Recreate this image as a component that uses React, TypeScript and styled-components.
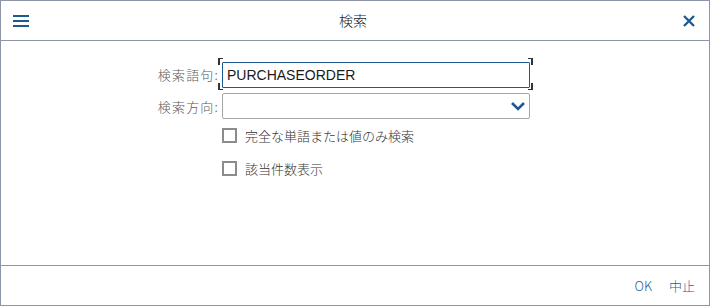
import React from "react";
import styled, { createGlobalStyle } from "styled-components";

const Global = createGlobalStyle`
  html, body { margin: 0; padding: 0; background: #ffffff; }
  body { font-family: "Noto Sans CJK JP", "Noto Sans", sans-serif; }
  * { box-sizing: border-box; }
`;

const Window = styled.div`
  width: 710px;
  height: 306px;
  border: 1px solid #8e95a8;
  display: flex;
  flex-direction: column;
  background: #fff;
`;

const Header = styled.header`
  height: 40px;
  flex: none;
  border-bottom: 1px solid #8e95a8;
  display: grid;
  grid-template-columns: 40px 1fr 40px;
  align-items: center;
`;

const IconButton = styled.button`
  border: 0;
  background: transparent;
  padding: 0;
  height: 39px;
  display: flex;
  align-items: center;
  justify-content: center;
  color: #1d5a93;
  cursor: pointer;
`;

const Title = styled.h1`
  margin: 0 0 0 -4px;
  text-align: center;
  font-size: 14px;
  font-weight: 300;
  color: #222;
  line-height: 39px;
`;

const Content = styled.main`
  flex: 1;
  padding-top: 20px;
`;

const FormGrid = styled.div`
  display: grid;
  grid-template-columns: 218px 308px;
  column-gap: 3px;
  row-gap: 6px;
  align-items: center;
`;

const Label = styled.label`
  text-align: right;
  font-size: 13px;
  font-weight: 300;
  letter-spacing: 1.2px;
  color: #5a5a5a;
  white-space: nowrap;
`;

const FieldWrap = styled.div`
  position: relative;
  height: 26px;
`;

const TextInput = styled.input`
  width: 100%;
  height: 26px;
  border: 1px solid #1d5a93;
  border-radius: 1px;
  padding: 0 4px;
  font-family: "Liberation Sans", Arial, sans-serif;
  font-size: 14px;
  color: #1a1a1a;
  outline: none;
`;

const Corner = styled.span<{ $top?: boolean; $left?: boolean }>`
  position: absolute;
  width: 5px;
  height: 7px;
  border-color: #333;
  border-style: solid;
  border-width: 0;
  ${(p) => (p.$top ? "top: -3px; border-top-width: 1px;" : "bottom: -3px; border-bottom-width: 1px;")}
  ${(p) =>
    p.$left
      ? "left: -4px; border-left-width: 2px;"
      : "right: -3px; border-right-width: 2px;"}
`;

const SelectBox = styled.div`
  height: 26px;
  border: 1px solid #a6a6a6;
  border-radius: 2px;
  display: flex;
  align-items: center;
  justify-content: flex-end;
  padding-right: 3px;
  color: #1d5a93;
`;

const Checks = styled.div`
  display: flex;
  flex-direction: column;
  gap: 19px;
  margin: 9px 0 0 221px;
`;

const CheckRow = styled.label`
  display: flex;
  align-items: center;
  height: 14px;
  gap: 8px;
  font-size: 13px;
  font-weight: 300;
  color: #333;
`;

const Box = styled.span`
  width: 15px;
  height: 15px;
  border: 2px solid #8c8c8c;
  background: #fff;
  flex: none;
`;

const Footer = styled.footer`
  height: 40px;
  flex: none;
  border-top: 1px solid #8e95a8;
  display: flex;
  justify-content: flex-end;
  align-items: center;
  gap: 17px;
  padding: 0 14px 1px 0;
`;

const FooterButton = styled.button`
  border: 0;
  background: transparent;
  padding: 0;
  font-family: "Noto Sans CJK JP", "Noto Sans", sans-serif;
  font-size: 13px;
  font-weight: 300;
  color: #1f5f98;
  cursor: pointer;
`;

export default function App() {
  return (
    <>
      <Global />
      <Window>
        <Header>
          <IconButton aria-label="menu">
            <svg width="16" height="12" viewBox="0 0 16 12">
              <rect x="0" y="0" width="16" height="2" fill="currentColor" />
              <rect x="0" y="5" width="16" height="2" fill="currentColor" />
              <rect x="0" y="10" width="16" height="2" fill="currentColor" />
            </svg>
          </IconButton>
          <Title>検索</Title>
          <IconButton aria-label="close">
            <svg width="12" height="12" viewBox="0 0 12 12">
              <path d="M1 1 L11 11 M11 1 L1 11" stroke="currentColor" strokeWidth="2.4" />
            </svg>
          </IconButton>
        </Header>
        <Content>
          <FormGrid>
            <Label>検索語句:</Label>
            <FieldWrap>
              <TextInput defaultValue="PURCHASEORDER" />
              <Corner $top $left />
              <Corner $top />
              <Corner $left />
              <Corner />
            </FieldWrap>
            <Label>検索方向:</Label>
            <SelectBox>
              <svg width="16" height="10" viewBox="0 0 16 10">
                <path d="M2 2 L8 8 L14 2" fill="none" stroke="currentColor" strokeWidth="2.6" />
              </svg>
            </SelectBox>
          </FormGrid>
          <Checks>
            <CheckRow>
              <Box />
              完全な単語または値のみ検索
            </CheckRow>
            <CheckRow>
              <Box />
              該当件数表示
            </CheckRow>
          </Checks>
        </Content>
        <Footer>
          <FooterButton>OK</FooterButton>
          <FooterButton>中止</FooterButton>
        </Footer>
      </Window>
    </>
  );
}
